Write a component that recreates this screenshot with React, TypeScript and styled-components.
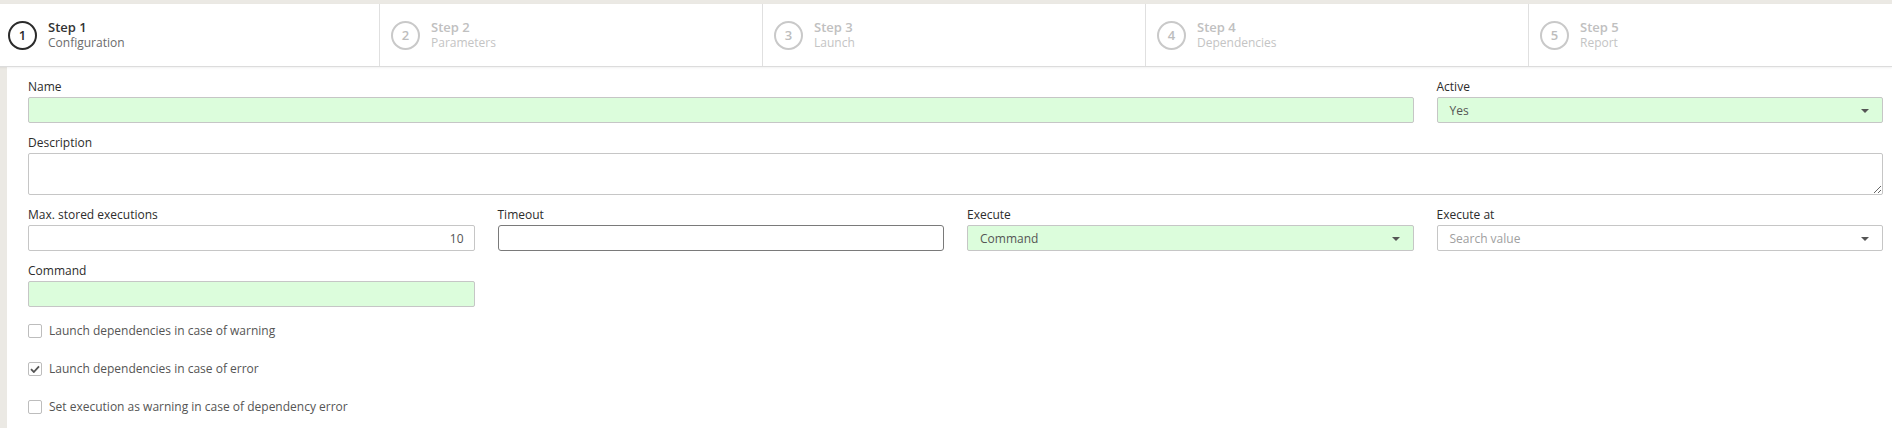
import React from "react";
import styled, { createGlobalStyle, css } from "styled-components";

const GlobalStyle = createGlobalStyle`
  html, body {
    margin: 0;
    padding: 0;
    background: #ebe9e4;
    font-family: "Open Sans", "Liberation Sans", sans-serif;
    overflow: hidden;
  }
  * { box-sizing: border-box; }
`;

const Page = styled.div`
  width: 1892px;
  height: 428px;
  padding-top: 4px;
  display: flex;
  flex-direction: column;
  overflow: hidden;
`;

const Stepper = styled.div`
  display: flex;
  height: 63px;
  background: #fff;
  margin-left: -3px;
  border-bottom: 1px solid #dcdcdc;
  box-shadow: 0 1px 2px rgba(0, 0, 0, 0.06);
  position: relative;
  z-index: 1;
  flex-shrink: 0;
`;

const Step = styled.div`
  width: 383px;
  flex-shrink: 0;
  display: flex;
  align-items: center;
  padding-left: 11px;
  border-right: 1px solid #e0e0e0;
`;

const Circle = styled.div<{ $active?: boolean }>`
  width: 29px;
  height: 29px;
  border-radius: 50%;
  border: 2px solid ${(p) => (p.$active ? "#2b2b2b" : "#c9c9c9")};
  color: ${(p) => (p.$active ? "#2b2b2b" : "#bdbdbd")};
  display: flex;
  align-items: center;
  justify-content: center;
  font-size: 13px;
  font-weight: 600;
  margin-right: 11px;
`;

const StepText = styled.div<{ $active?: boolean }>`
  display: flex;
  flex-direction: column;
  line-height: 16px;
  color: ${(p) => (p.$active ? "#333" : "#c0c0c0")};
`;

const StepTitle = styled.span`
  font-size: 13px;
  font-weight: 600;
`;

const StepSub = styled.span<{ $active?: boolean }>`
  font-size: 12px;
  color: ${(p) => (p.$active ? "#6b6b6b" : "#c4c4c4")};
`;

const Panel = styled.div`
  flex: 1;
  margin-left: 7px;
  background: #fff;
  padding: 11px 9px 0 21px;
`;

const FormGrid = styled.div`
  display: grid;
  grid-template-columns: repeat(4, 1fr);
  column-gap: 23px;
  row-gap: 11px;
`;

const Field = styled.div<{ $span?: number }>`
  display: flex;
  flex-direction: column;
  grid-column: span ${(p) => p.$span ?? 1};
`;

const Label = styled.label`
  font-size: 12px;
  font-weight: 400;
  color: #2c2c2c;
  line-height: 18px;
  margin-bottom: 1px;
`;

const controlBase = css<{ $valid?: boolean; $focus?: boolean }>`
  height: 26px;
  width: 100%;
  border: 1px solid ${(p) => (p.$focus ? "#7a7a7a" : "#c6c6c6")};
  border-radius: ${(p) => (p.$focus ? "3px" : "2px")};
  background: ${(p) => (p.$valid ? "#dcfddc" : "#fff")};
  font-family: "Open Sans", "Liberation Sans", sans-serif;
  font-size: 12px;
  color: #555;
  padding: 0 12px;
  outline: none;
`;

const Input = styled.input<{ $valid?: boolean; $focus?: boolean; $right?: boolean }>`
  ${controlBase};
  text-align: ${(p) => (p.$right ? "right" : "left")};
  padding-right: ${(p) => (p.$right ? "10px" : "12px")};
`;

const TextArea = styled.textarea`
  height: 42px;
  width: 100%;
  border: 1px solid #c6c6c6;
  border-radius: 2px;
  background: #fff;
  font-family: "Open Sans", "Liberation Sans", sans-serif;
  font-size: 12px;
  resize: vertical;
  outline: none;
  display: block;
`;

const Select = styled.div<{ $valid?: boolean }>`
  ${controlBase};
  display: flex;
  align-items: center;
  justify-content: space-between;
  padding: 0 13px 0 12px;
`;

const Placeholder = styled.span`
  color: #a0a0a0;
`;

const Caret = styled.span`
  width: 0;
  height: 0;
  border-left: 4px solid transparent;
  border-right: 4px solid transparent;
  border-top: 4px solid #555;
  margin-top: 1px;
`;

const Checks = styled.div`
  display: flex;
  flex-direction: column;
  gap: 18px;
  margin-top: 14px;
`;

const CheckRow = styled.label`
  display: flex;
  align-items: center;
  height: 20px;
  line-height: 20px;
  font-size: 12px;
  color: #555;
`;

const Box = styled.span`
  width: 14px;
  height: 14px;
  border: 1px solid #bdbdbd;
  border-radius: 2px;
  background: #fff;
  margin-right: 7px;
  display: flex;
  align-items: center;
  justify-content: center;
`;

const CheckBox = ({ checked }: { checked?: boolean }) => (
  <Box>
    {checked && (
      <svg width="10" height="8" viewBox="0 0 10 8">
        <path d="M1 4.2 L3.8 7 L9 1.3" fill="none" stroke="#555" strokeWidth="1.8" />
      </svg>
    )}
  </Box>
);

const steps = [
  { n: 1, title: "Step 1", sub: "Configuration" },
  { n: 2, title: "Step 2", sub: "Parameters" },
  { n: 3, title: "Step 3", sub: "Launch" },
  { n: 4, title: "Step 4", sub: "Dependencies" },
  { n: 5, title: "Step 5", sub: "Report" },
];

export default function App() {
  return (
    <>
      <GlobalStyle />
      <Page>
        <Stepper>
          {steps.map((s) => {
            const active = s.n === 1;
            return (
              <Step key={s.n}>
                <Circle $active={active}>{s.n}</Circle>
                <StepText $active={active}>
                  <StepTitle>{s.title}</StepTitle>
                  <StepSub $active={active}>{s.sub}</StepSub>
                </StepText>
              </Step>
            );
          })}
        </Stepper>
        <Panel>
          <FormGrid>
            <Field $span={3}>
              <Label>Name</Label>
              <Input $valid />
            </Field>
            <Field>
              <Label>Active</Label>
              <Select $valid>
                <span>Yes</span>
                <Caret />
              </Select>
            </Field>
            <Field $span={4}>
              <Label>Description</Label>
              <TextArea />
            </Field>
            <Field>
              <Label>Max. stored executions</Label>
              <Input $right defaultValue="10" />
            </Field>
            <Field>
              <Label>Timeout</Label>
              <Input $focus />
            </Field>
            <Field>
              <Label>Execute</Label>
              <Select $valid>
                <span>Command</span>
                <Caret />
              </Select>
            </Field>
            <Field>
              <Label>Execute at</Label>
              <Select>
                <Placeholder>Search value</Placeholder>
                <Caret />
              </Select>
            </Field>
            <Field>
              <Label>Command</Label>
              <Input $valid />
            </Field>
          </FormGrid>
          <Checks>
            <CheckRow>
              <CheckBox />
              Launch dependencies in case of warning
            </CheckRow>
            <CheckRow>
              <CheckBox checked />
              Launch dependencies in case of error
            </CheckRow>
            <CheckRow>
              <CheckBox />
              Set execution as warning in case of dependency error
            </CheckRow>
          </Checks>
        </Panel>
      </Page>
    </>
  );
}
